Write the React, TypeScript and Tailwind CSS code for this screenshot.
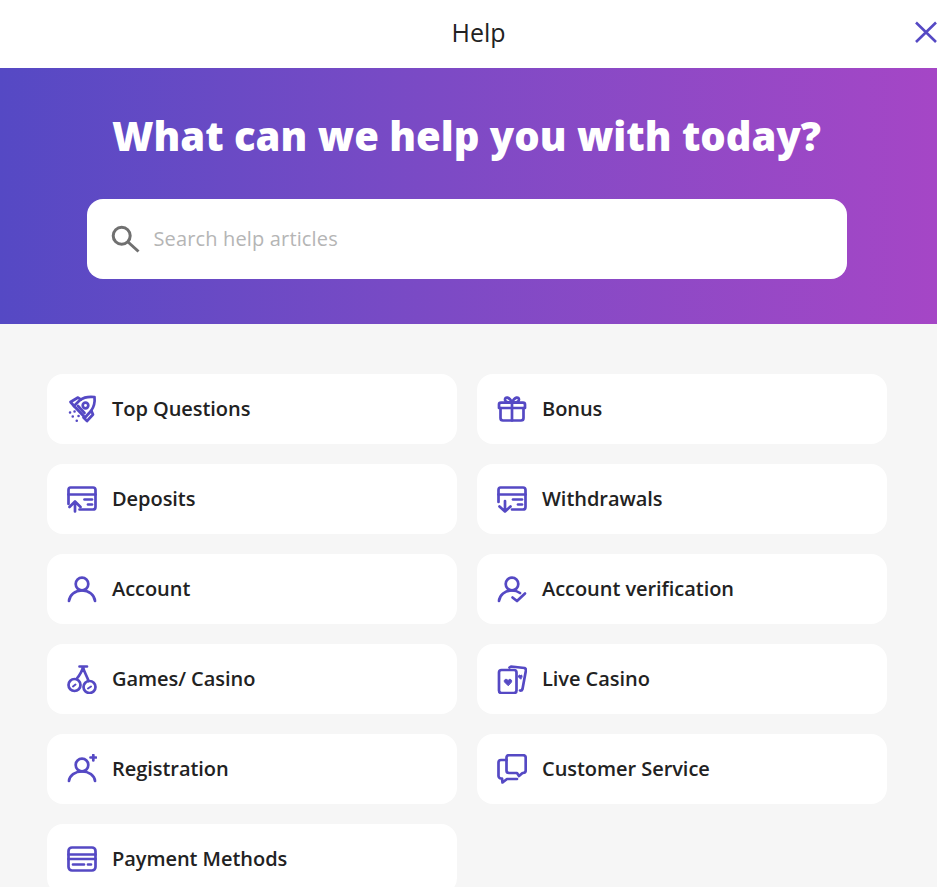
import React from "react";

const S = ({ children }: { children: React.ReactNode }) => (
  <svg width="30" height="30" viewBox="0 0 30 30" fill="none" stroke="#5549c4" strokeWidth="2.700" strokeLinecap="round" strokeLinejoin="round" className="shrink-0">
    {children}
  </svg>
);

const Rocket = () => (
  <S>
    <path d="M13 6C17 3 23 2.500 27.500 3C28 7.500 27 13 24 17" />
    <path d="M14 5.500L11 3.500L3.500 8L7 12" />
    <path d="M24.500 17L26 20.500L20 27L16.500 23.500" />
    <path d="M13 6L7 12L18 23.500L24 17" />
    <path d="M11 12L17.500 19" />
    <circle cx="18.500" cy="11.500" r="2.800" />
    <path d="M3 18.500h.1M5.700 22.500h.1M9.700 26.800h.1M7.500 17.500h.1M11.500 22h.1" strokeWidth="2.500" />
  </S>
);
const Gift = () => (
  <S>
    <path d="M3.500 14V24C3.500 25.500 4.500 26.500 6 26.500H24C25.500 26.500 26.500 25.500 26.500 24V14" />
    <path d="M2 10.500C2 9.500 3 8.700 4 8.700H26C27 8.700 28 9.500 28 10.500V14H2Z" />
    <path d="M15 8.700V26.500" />
    <path d="M15 8.700C12 8.700 8 8 8 5.500C8 2.500 12.500 2.500 15 8.700C17.500 2.500 22 2.500 22 5.500C22 8 18 8.700 15 8.700Z" />
  </S>
);
const Deposit = () => (
  <S>
    <path d="M12.500 25.500H26C27.500 25.500 28.500 24.500 28.500 23V6C28.500 4.500 27.500 3.500 26 3.500H3.500C2 3.500 1.500 4.500 1.500 6V20" />
    <path d="M1.500 10.500H28.500" />
    <path d="M8 27.500V17.500M2.500 23L8 17.500L13.500 23" />
    <path d="M21 20.500H25" />
    <path d="M17.500 15.500H25" />
  </S>
);
const Withdraw = () => (
  <S>
    <path d="M15 25.500H26C27.500 25.500 28.500 24.500 28.500 23V6C28.500 4.500 27.500 3.500 26 3.500H3.500C2 3.500 1.500 4.500 1.500 6V18" />
    <path d="M1.500 10.500H28.500" />
    <path d="M8 17V27.500M2.500 22.500L8 27.500L13.500 22.500" />
    <path d="M21 20.500H25" />
    <path d="M16 15.500H25" />
  </S>
);
const User = () => (
  <S>
    <circle cx="15" cy="10" r="6.300" />
    <path d="M2 27C2.500 21 8 16.500 15 16.500C22 16.500 27.500 21 28 27" />
  </S>
);
const UserCheck = () => (
  <S>
    <circle cx="15" cy="10" r="6.300" />
    <path d="M2 27C2.500 21 8 16.500 15 16.500C18 16.500 21 17.500 23 19" />
    <path d="M15.500 23.500L20 27L28 19.500" />
  </S>
);
const Cherry = () => (
  <S>
    <circle cx="7.500" cy="21" r="6" />
    <circle cx="22.500" cy="23" r="6" />
    <path d="M9.500 15C12 12 15 8 16 3C17 8 20 12 21.500 17M12.500 2.500H20" />
    <path d="M6 22.500L8.500 20.500M21 24.500L24 22.500" strokeWidth="2" />
  </S>
);
const Cards = () => (
  <S>
    <rect x="2" y="6" width="17.500" height="23" rx="2.500" />
    <path d="M12.500 3.500L14 2.500L27.500 4C28.500 4.500 29 5 29 6L25.500 25C25.200 26 24.500 26.700 23 26.500" />
    <path d="M11 21.500L7.500 18C6.500 16 9 14 11 16.500C13 14 15.500 16 14.500 18Z" fill="#5549c4" strokeWidth="1" />
    <path d="M23.500 15L21.500 13C21 11.500 22.500 10.500 23.500 11.500C24.500 10.500 25.500 11.500 25 13Z" fill="#5549c4" strokeWidth="1" />
  </S>
);
const UserPlus = () => (
  <S>
    <circle cx="15" cy="11" r="6.300" />
    <path d="M2 27C2.500 21.500 8 17.500 15 17.500C22 17.500 27.500 21.500 28 27" />
    <path d="M26.300 1V6.500M23.500 3.500H29" />
  </S>
);
const Chat = () => (
  <S>
    <path d="M9.500 3.500C9.500 2 10.500 1.200 12 1.200H26C27.500 1.200 28.700 2 28.700 3.500V16.500C28.700 18 27.500 19 26 19H25.500L22 22L20 19H12C10.500 19 9.500 18 9.500 16.500Z" />
    <path d="M9.500 6H4C2.500 6 1.500 7 1.500 8.500V22C1.500 23 2.500 24.500 4 24.500H5L5.500 28.500L10 25H20" />
  </S>
);
const Card = () => (
  <S>
    <rect x="1.500" y="3.500" width="27" height="23" rx="3.500" />
    <path d="M1.500 10.500H28.500M1.500 15H28.500" />
    <path d="M6 20.500H17M21 20.500H24" />
  </S>
);

const items: [string, React.ReactNode][] = [
  ["Top Questions", <Rocket />],
  ["Bonus", <Gift />],
  ["Deposits", <Deposit />],
  ["Withdrawals", <Withdraw />],
  ["Account", <User />],
  ["Account verification", <UserCheck />],
  ["Games/ Casino", <Cherry />],
  ["Live Casino", <Cards />],
  ["Registration", <UserPlus />],
  ["Customer Service", <Chat />],
  ["Payment Methods", <Card />],
];

export default function App() {
  return (
    <div className="h-[887px] w-[937px] overflow-hidden bg-[#f6f6f6] font-['Open_Sans',sans-serif] text-[#222222]">
      <header className="relative flex h-[68px] items-center justify-center bg-white pl-[20px] pb-[2px]">
        <h1 className="text-[25px] font-medium">Help</h1>
        <svg className="absolute right-0 top-[20px]" width="24" height="24" viewBox="0 0 24 24" fill="none" stroke="#5549c4" strokeWidth="2.600">
          <path d="M3 2.500L23 22M23 2.500L3 22" />
        </svg>
      </header>
      <section className="flex h-[256px] flex-col items-center bg-gradient-to-r from-[#5549c4] to-[#a546c6] pr-[4px] pt-[40px]">
        <h2 className="text-[40px] font-extrabold leading-[56px] text-white">What can we help you with today?</h2>
        <div className="mt-[35px] flex h-[80px] w-[760px] items-center gap-[13px] rounded-[16px] bg-white pl-[24px]">
          <svg width="30" height="30" viewBox="0 0 30 30" fill="none" stroke="#707070" strokeWidth="3">
            <circle cx="10.700" cy="11.700" r="8.500" />
            <path d="M17 18L27.500 27.500" />
          </svg>
          <span className="text-[20px] tracking-[0.150px] text-[#b5b5b5]">Search help articles</span>
        </div>
      </section>
      <main className="grid grid-cols-[410px_410px] gap-5 pl-[47px] pt-[50px]">
        {items.map(([label, icon]) => (
          <div key={label} className="flex h-[70px] items-center gap-[15px] rounded-[16px] bg-white pl-[20px]">
            {icon}
            <span className="text-[20px] font-semibold tracking-[-0.050px] text-[#222222]">{label}</span>
          </div>
        ))}
      </main>
    </div>
  );
}
